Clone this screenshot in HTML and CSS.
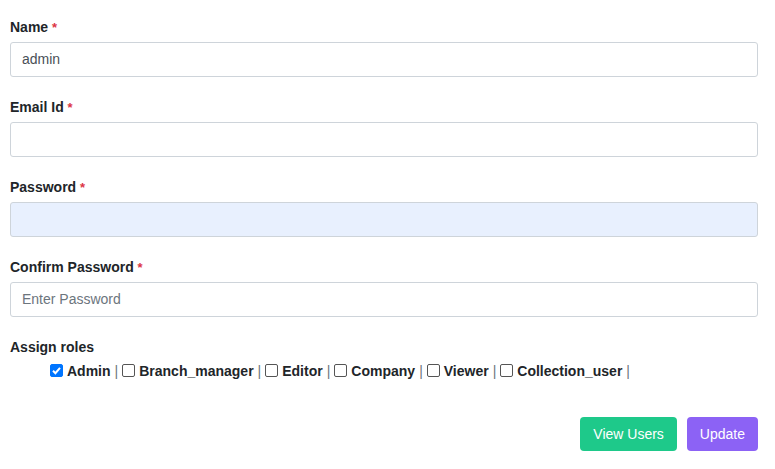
FILE: index.html
```html
<!DOCTYPE html>
<html>
<head>
<meta charset="utf-8">
<link rel="stylesheet" href="styles.css">
</head>
<body>
<form class="form">
  <div class="group">
    <label class="label">Name <span class="req">*</span></label>
    <div class="input">admin</div>
  </div>
  <div class="group">
    <label class="label">Email Id <span class="req">*</span></label>
    <div class="input"></div>
  </div>
  <div class="group">
    <label class="label">Password <span class="req">*</span></label>
    <div class="input autofill"></div>
  </div>
  <div class="group">
    <label class="label">Confirm Password <span class="req">*</span></label>
    <div class="input placeholder">Enter Password</div>
  </div>
  <div class="roles">
    <div class="label">Assign roles</div>
    <div class="role-list">
      <span class="role"><span class="cb checked"><svg viewBox="0 0 13 13" width="13" height="13"><path d="M3 6.8 L5.4 9.2 L10 3.8" fill="none" stroke="#fff" stroke-width="2"/></svg></span>Admin</span><span class="sep">|</span>
      <span class="role"><span class="cb"></span>Branch_manager</span><span class="sep">|</span>
      <span class="role"><span class="cb"></span>Editor</span><span class="sep">|</span>
      <span class="role"><span class="cb"></span>Company</span><span class="sep">|</span>
      <span class="role"><span class="cb"></span>Viewer</span><span class="sep">|</span>
      <span class="role"><span class="cb"></span>Collection_user</span><span class="sep">|</span>
    </div>
  </div>
  <div class="actions">
    <button type="button" class="btn btn-green">View Users</button>
    <button type="button" class="btn btn-purple">Update</button>
  </div>
</form>
</body>
</html>
```
FILE: styles.css
```css
* { box-sizing: border-box; }
body {
  margin: 0;
  background: #fff;
  font-family: "Liberation Sans", Arial, sans-serif;
  font-size: 14px;
  color: #212529;
}
.form {
  width: 748px;
  margin: 16px 0 0 10px;
}
.group {
  margin-bottom: 19px;
}
.label {
  display: block;
  font-weight: bold;
  line-height: 20px;
  height: 21px;
  padding-top: 1px;
  margin-bottom: 5px;
  color: #212529;
}
.req {
  color: #dc3545;
  font-size: 13px;
  line-height: 1;
}
.input {
  height: 35px;
  border: 1px solid #ced4da;
  border-radius: 3px;
  padding: 0 11px;
  line-height: 33px;
  color: #495057;
  background: #fff;
}
.input.autofill {
  background: #e8f0fe;
}
.input.placeholder {
  color: #6c757d;
}
.roles .label {
  margin-bottom: 4px;
}
.role-list {
  padding-left: 40px;
  line-height: 21px;
  display: flex;
  align-items: center;
}
.role {
  font-weight: bold;
  display: inline-flex;
  align-items: center;
}
.cb {
  display: inline-block;
  width: 13px;
  height: 13px;
  border: 1px solid #555;
  border-radius: 2px;
  margin-right: 4px;
  background: #fff;
  position: relative;
  top: -1px;
}
.cb.checked {
  background: #0075ff;
  border-color: #0075ff;
}
.cb.checked svg {
  display: block;
  margin: -1px;
}
.sep {
  color: #6c757d;
  margin: 0 4px;
}
.actions {
  display: flex;
  justify-content: flex-end;
  gap: 10px;
  margin-top: 35px;
}
.btn {
  font-family: "Liberation Sans", Arial, sans-serif;
  font-size: 14px;
  color: #fff;
  border: none;
  border-radius: 4px;
  height: 34px;
  padding: 0 13px;
  cursor: pointer;
}
.btn-green { background: #1ec98a; }
.btn-purple { background: #8c62f5; }
```
